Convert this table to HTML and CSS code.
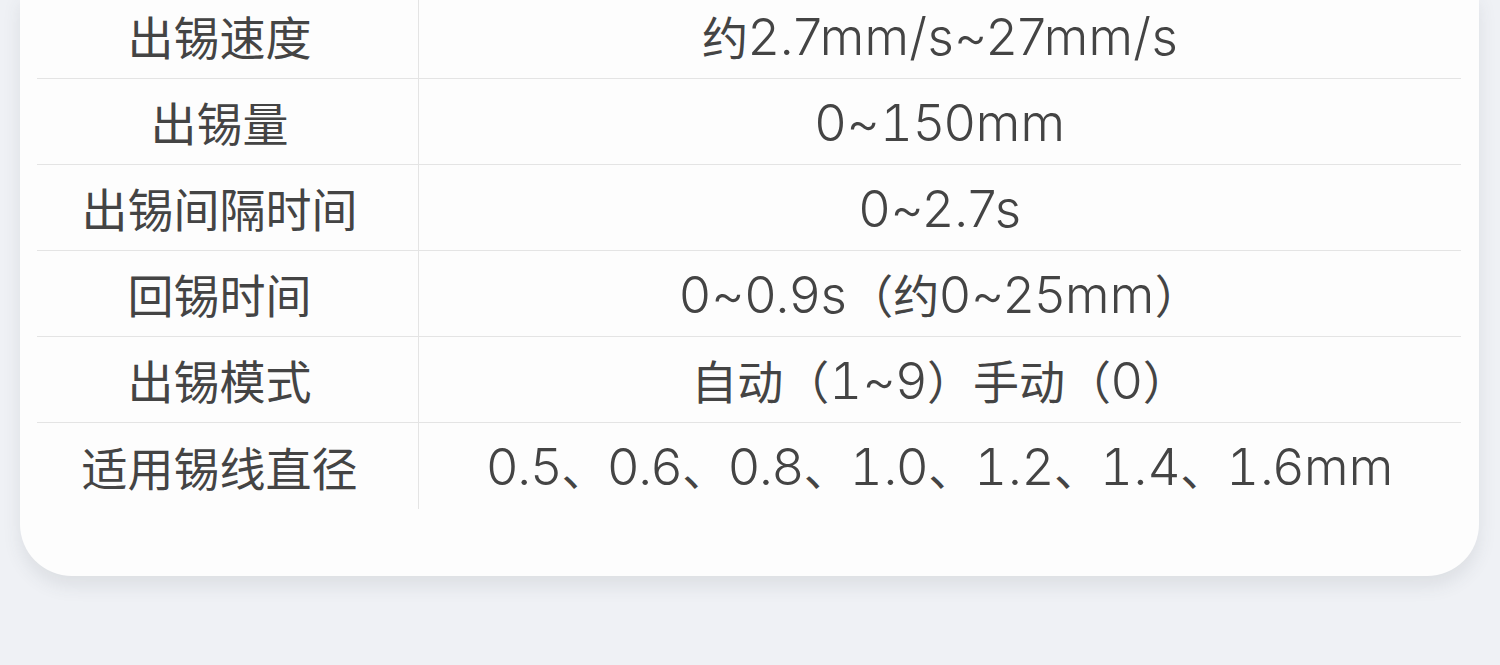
FILE: index.html
```html
<!DOCTYPE html>
<html lang="zh">
<head>
<meta charset="utf-8">
<title>参数</title>
<link rel="stylesheet" href="styles.css">
</head>
<body>
<div class="card">
  <div class="table">
    <div class="row"><div class="label">出锡速度</div><div class="value">约<span class="n">2.7mm/s~27mm/s</span></div></div>
    <div class="row"><div class="label">出锡量</div><div class="value"><span class="n">0~<span class="one">1</span>50mm</span></div></div>
    <div class="row"><div class="label">出锡间隔时间</div><div class="value"><span class="n">0~2.7s</span></div></div>
    <div class="row"><div class="label">回锡时间</div><div class="value"><span class="n">0~0.9s</span>（约<span class="n">0~25mm</span>）</div></div>
    <div class="row"><div class="label">出锡模式</div><div class="value">自动（<span class="n"><span class="one">1</span>~9</span>）手动（<span class="n">0</span>）</div></div>
    <div class="row last"><div class="label">适用锡线直径</div><div class="value"><span class="n">0.5</span>、<span class="n">0.6</span>、<span class="n">0.8</span>、<span class="n"><span class="one">1</span>.0</span>、<span class="n"><span class="one">1</span>.2</span>、<span class="n"><span class="one">1</span>.4</span>、<span class="n"><span class="one">1</span>.6mm</span></div></div>
  </div>
</div>
</body>
</html>
```

FILE: styles.css
```css
html, body {
  margin: 0;
  padding: 0;
  background: #eff1f5;
  width: 1500px;
  height: 665px;
  overflow: hidden;
}
.card {
  margin: -7px 21px 0 20px;
  background: #fdfdfd;
  border-radius: 0 0 52px 52px;
  box-shadow: 0 10px 18px rgba(60, 70, 80, 0.10);
  padding: 0 18px 67px 17px;
}
.table {
  display: flex;
  flex-direction: column;
}
.row {
  display: grid;
  grid-template-columns: 382px 1fr;
  height: 86px;
  border-bottom: 1.5px solid #e4e4e4;
  box-sizing: border-box;
}
.row.last {
  border-bottom: none;
}
.label, .value {
  display: flex;
  align-items: center;
  justify-content: center;
  font-family: "Noto Sans CJK SC", sans-serif;
  font-weight: 400;
  font-size: 46px;
  color: #444444;
  padding-bottom: 1px;
  box-sizing: border-box;
  white-space: pre;
}
.label {
  padding-right: 16px;
  border-right: 1.5px solid #e4e4e4;
}
.n {
  font-family: "Inter", sans-serif;
  font-weight: 300;
  font-size: 51px;
  letter-spacing: 0.3px;
  position: relative;
  top: 1px;
}
.one {
  font-variant-numeric: tabular-nums;
}
```
